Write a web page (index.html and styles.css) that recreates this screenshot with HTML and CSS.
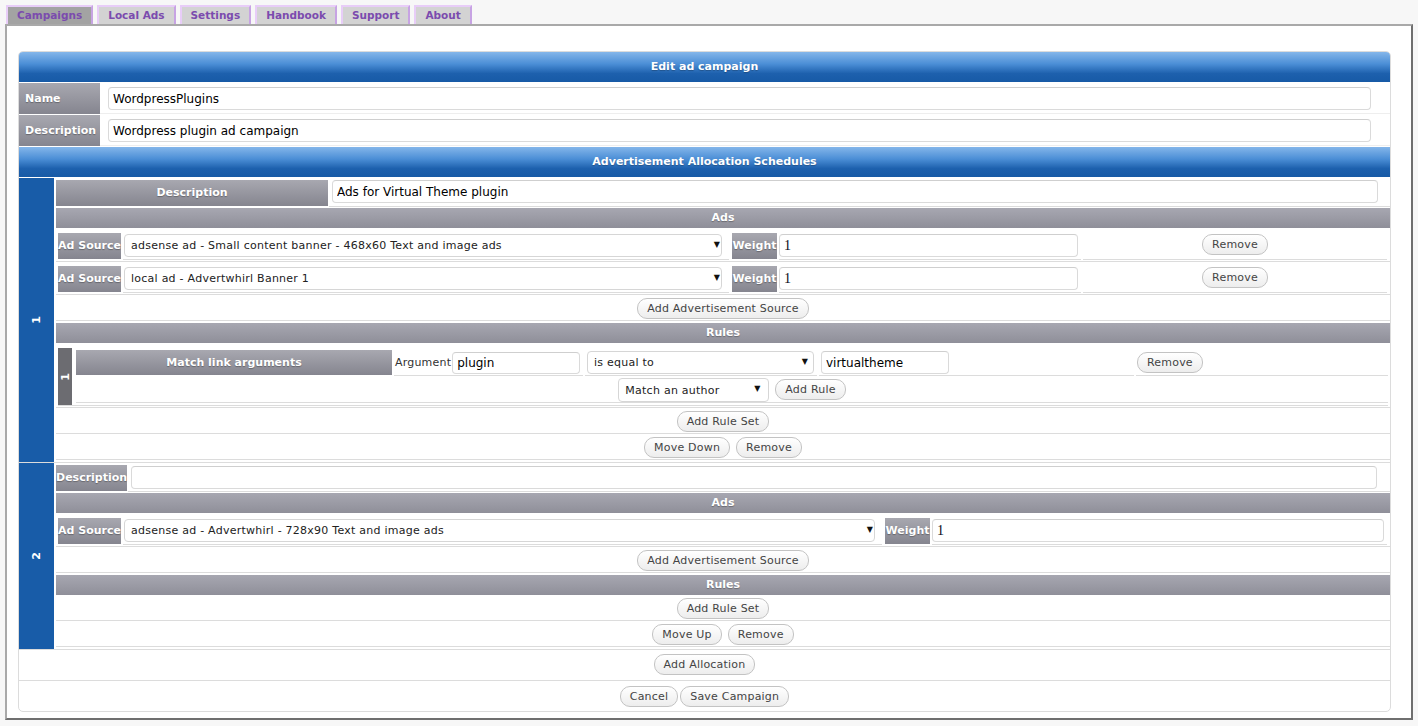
FILE: index.html
```html
<!DOCTYPE html>
<html>
<head>
<meta charset="utf-8">
<title>Edit ad campaign</title>
<link rel="stylesheet" href="styles.css">
</head>
<body>
<nav class="tabs">
  <span class="tab active">Campaigns</span>
  <span class="tab">Local Ads</span>
  <span class="tab">Settings</span>
  <span class="tab">Handbook</span>
  <span class="tab">Support</span>
  <span class="tab">About</span>
</nav>
<main class="panel">
  <div class="campaign">
    <div class="hdr hdr-top">Edit ad campaign</div>
    <div class="frow">
      <div class="flabel">Name</div>
      <div class="fcell"><input class="text ftext" value="WordpressPlugins"></div>
    </div>
    <div class="frow">
      <div class="flabel">Description</div>
      <div class="fcell"><input class="text ftext" value="Wordpress plugin ad campaign"></div>
    </div>
    <div class="hdr">Advertisement Allocation Schedules</div>

    <div class="alloc">
      <div class="alloc-num"><span>1</span></div>
      <div class="alloc-body">
        <div class="desc-row">
          <div class="label desc-label-wide">Description</div>
          <div class="desc-cell"><input class="text desc-input-1" value="Ads for Virtual Theme plugin"></div>
        </div>
        <div class="bar">Ads</div>
        <div class="ad-wrap first">
          <div class="ad-row">
            <div class="label src-label">Ad Source</div>
            <div class="cell sel-cell"><span class="sel"><select class="select ad-select"><option>adsense ad - Small content banner - 468x60 Text and image ads</option></select></span></div>
            <div class="label weight-label">Weight</div>
            <div class="cell weight-cell"><input class="text weight-input" value="1"></div>
            <div class="cell remove-cell"><button class="btn">Remove</button></div>
          </div>
        </div>
        <div class="ad-wrap">
          <div class="ad-row">
            <div class="label src-label">Ad Source</div>
            <div class="cell sel-cell"><span class="sel"><select class="select ad-select"><option>local ad - Advertwhirl Banner 1</option></select></span></div>
            <div class="label weight-label">Weight</div>
            <div class="cell weight-cell"><input class="text weight-input" value="1"></div>
            <div class="cell remove-cell"><button class="btn">Remove</button></div>
          </div>
        </div>
        <div class="btn-row after-ads"><button class="btn">Add Advertisement Source</button></div>
        <div class="bar rules-bar">Rules</div>
        <div class="ruleset-wrap">
          <div class="ruleset">
            <div class="ruleset-num"><span>1</span></div>
            <div class="ruleset-body">
              <div class="rule-row">
                <div class="label rule-label">Match link arguments</div>
                <div class="cell arg-cell"><span class="arg-text">Argument</span><input class="text arg-input" value="plugin"></div>
                <div class="cell op-cell"><span class="sel"><select class="select op-select"><option>is equal to</option></select></span></div>
                <div class="cell val-cell"><input class="text val-input" value="virtualtheme"></div>
                <div class="cell rm-rule-cell"><button class="btn">Remove</button></div>
              </div>
              <div class="add-rule-row">
                <span class="sel"><select class="select author-select"><option>Match an author</option></select></span>
                <button class="btn">Add Rule</button>
              </div>
            </div>
          </div>
        </div>
        <div class="btn-row"><button class="btn">Add Rule Set</button></div>
        <div class="btn-row move-row"><button class="btn">Move Down</button><button class="btn">Remove</button></div>
      </div>
    </div>

    <div class="alloc">
      <div class="alloc-num"><span>2</span></div>
      <div class="alloc-body">
        <div class="desc-row">
          <div class="label desc-label">Description</div>
          <div class="desc-cell"><input class="text desc-input-2" value=""></div>
        </div>
        <div class="bar">Ads</div>
        <div class="ad-wrap first">
          <div class="ad-row">
            <div class="label src-label">Ad Source</div>
            <div class="cell sel-cell wide"><span class="sel"><select class="select ad-select wide"><option>adsense ad - Advertwhirl - 728x90 Text and image ads</option></select></span></div>
            <div class="label weight-label">Weight</div>
            <div class="cell weight-cell wide"><input class="text weight-input wide" value="1"></div>
          </div>
        </div>
        <div class="btn-row after-ads"><button class="btn">Add Advertisement Source</button></div>
        <div class="bar rules-bar">Rules</div>
        <div class="btn-row"><button class="btn">Add Rule Set</button></div>
        <div class="btn-row move-row"><button class="btn">Move Up</button><button class="btn">Remove</button></div>
      </div>
    </div>

    <div class="outer-row"><button class="btn">Add Allocation</button></div>
    <div class="outer-row last"><button class="btn">Cancel</button><button class="btn">Save Campaign</button></div>
  </div>
</main>
</body>
</html>
```

FILE: styles.css
```css
* { box-sizing: border-box; }

body {
  margin: 0;
  background: #f7f7f7;
  font-family: "DejaVu Sans", Verdana, sans-serif;
  font-size: 11px;
  color: #333;
}

/* tabs */
.tabs {
  display: flex;
  gap: 4px;
  height: 24px;
  padding: 5px 0 0 6px;
}
.tab {
  height: 19px;
  padding: 0 9px;
  border: 2px solid #e8cdf8;
  border-right-color: #c7a3e3;
  border-bottom: 0;
  background: #d3d3d3;
  color: #7b4bae;
  font-weight: bold;
  font-size: 10.5px;
  line-height: 16px;
}
.tab.active { background: #a3a3a3; }

/* panel */
.panel {
  display: block;
  margin-left: 5px;
  width: 1408px;
  height: 696px;
  border: 2px solid;
  border-color: #a9a9a9 #6f6f6f #6f6f6f #a9a9a9;
  background: #fff;
  padding: 25px 20px 0 11px;
}

.campaign {
  width: 1373px;
  border: 1px solid #dcdcdc;
  border-radius: 5px;
  overflow: hidden;
  background: #fff;
}

.hdr {
  height: 30px;
  line-height: 30px;
  text-align: center;
  color: #fff;
  font-weight: bold;
  font-size: 11px;
  background: linear-gradient(#84b6ea 0%, #4b8ed6 40%, #1d60ad 72%, #175aa6 100%);
  text-shadow: 0 1px 1px rgba(0,0,0,0.25);
  margin-bottom: 1px;
}

.frow {
  display: flex;
  height: 31px;
  margin-bottom: 1px;
}
.flabel, .label {
  background: linear-gradient(#a8a8b0, #85858f);
  color: #fff;
  font-weight: bold;
  font-size: 11px;
  text-shadow: 0 1px 1px rgba(0,0,0,0.3);
  white-space: nowrap;
}
.flabel {
  width: 81px;
  padding-left: 6px;
  line-height: 31px;
}
.fcell {
  flex: 1;
  padding: 4px 0 0 8px;
  border-bottom: 1px solid #eee;
}

/* inputs */
.text {
  display: block;
  height: 23px;
  border: 1px solid #dadada;
  border-top-color: #cfcfcf;
  border-radius: 4px;
  padding: 0 5px 0 4px;
  font-family: "DejaVu Sans", Verdana, sans-serif;
  font-size: 12px;
  color: #000;
  background: #fff;
  outline: none;
}
.ftext { width: 1263px; }

.sel {
  position: relative;
  display: block;
}
.sel::after {
  content: "\25BC";
  position: absolute;
  right: 9px;
  top: 6px;
  font-size: 8px;
  color: #111;
  pointer-events: none;
}
.select {
  display: block;
  -webkit-appearance: none;
  appearance: none;
  height: 23px;
  border: 1px solid #d6d6d6;
  border-radius: 4px;
  background: #fff;
  padding: 0 20px 0 6px;
  font-family: "DejaVu Sans", Verdana, sans-serif;
  font-size: 11px;
  letter-spacing: 0.25px;
  color: #222;
  outline: none;
}

/* allocations */
.alloc {
  display: flex;
  gap: 2px;
  border-bottom: 1px solid #dcdcdc;
}
.alloc-num {
  width: 35px;
  background: #185ca8;
  color: #fff;
  font-weight: bold;
  font-size: 11px;
  display: flex;
  align-items: center;
  justify-content: center;
}
.alloc-num span, .ruleset-num span {
  writing-mode: vertical-rl;
  transform: rotate(180deg);
}
.alloc-body {
  width: 1334px;
  padding-bottom: 2px;
}

.desc-row {
  display: flex;
  height: 27px;
  margin-top: 2px;
}
.desc-row .label {
  height: 26px;
  line-height: 26px;
}
.desc-label-wide { width: 272px; text-align: center; }
.desc-label { width: 71px; text-align: center; }
.desc-cell {
  flex: 1;
  padding: 0 0 0 4px;
  border-bottom: 1px solid #dcdcdc;
  margin-left: 1px;
}
.desc-input-1 { width: 1046px; margin-left: -1px; }
.desc-input-2 { width: 1246px; margin-top: 1px; margin-left: -1px; }

.bar {
  height: 20px;
  line-height: 20px;
  margin-top: 1px;
  text-align: center;
  color: #fff;
  font-weight: bold;
  font-size: 11px;
  background: linear-gradient(#a7a7b1, #8f8f99);
  text-shadow: 0 1px 1px rgba(0,0,0,0.3);
}
.rules-bar { margin-top: 2px; }

.ad-wrap {
  margin-top: 2px;
  padding: 2px 2px 1px;
  border-bottom: 1px solid #dcdcdc;
}
.ad-wrap.first { margin-top: 3px; }
.ad-row {
  display: flex;
  gap: 2px;
  height: 27px;
}
.ad-row .label {
  height: 26px;
  line-height: 26px;
}
.cell {
  border-bottom: 1px solid #dcdcdc;
}
.src-label { width: 63px; text-align: center; }
.weight-label { width: 45px; text-align: center; margin-left: 1px; }
.sel-cell { width: 606px; padding: 1px 0 0 1px; }
.sel-cell.wide { width: 759px; }
.ad-select { width: 598px; }
.ad-select.wide { width: 751px; }
.weight-cell { width: 302px; padding: 1px 0 0 0; }
.weight-cell.wide { width: 455px; }
.weight-input {
  width: 299px;
  font-family: "Liberation Serif", "Times New Roman", serif;
  font-size: 14px;
  color: #0a0a20;
}
.weight-input.wide { width: 452px; }
.remove-cell {
  width: 304px;
  display: flex;
  justify-content: center;
  padding-top: 1px;
}

/* buttons */
.btn {
  height: 21px;
  padding: 0 9px;
  border: 1px solid #c3c3c3;
  border-radius: 10px;
  background: linear-gradient(#ffffff, #ededed);
  font-family: "DejaVu Sans", Verdana, sans-serif;
  font-size: 11px;
  letter-spacing: 0.2px;
  color: #444;
  line-height: 19px;
  cursor: pointer;
}

.btn-row {
  display: flex;
  justify-content: center;
  gap: 7px;
  margin-top: 2px;
  padding: 1px 0 1px;
  border-bottom: 1px solid #dcdcdc;
}
.btn-row.after-ads { margin-top: 1px; padding-top: 2px; }
.move-row { gap: 6px; }

/* rule set */
.ruleset-wrap {
  margin-top: 2px;
  padding: 3px 2px 1px;
  border-bottom: 1px solid #dcdcdc;
}
.ruleset {
  display: flex;
  gap: 4px;
  border-bottom: 1px solid #dcdcdc;
}
.ruleset-num {
  width: 14px;
  background: #6c6c71;
  color: #fff;
  font-weight: bold;
  font-size: 11px;
  display: flex;
  align-items: center;
  justify-content: center;
}
.ruleset-body {
  flex: 1;
  padding: 2px 0 2px;
}
.rule-row {
  display: flex;
  gap: 2px;
  height: 26px;
}
.rule-label {
  width: 316px;
  height: 25px;
  line-height: 25px;
  text-align: center;
}
.arg-cell {
  width: 189px;
  display: flex;
  align-items: flex-start;
  padding-top: 2px;
}
.arg-text {
  padding: 4px 1px 0 1px;
  color: #333;
  font-size: 11px;
  letter-spacing: 0.2px;
}
.arg-input { width: 128px; height: 22px; }
.op-cell { width: 232px; padding: 1px 0 0 2px; }
.op-select { width: 227px; }
.val-cell { width: 315px; padding: 1px 0 0 2px; }
.val-input { width: 128px; }
.rm-rule-cell { flex: 1; padding: 2px 0 0 1px; }
.add-rule-row {
  display: flex;
  justify-content: center;
  gap: 6px;
  margin-top: 2px;
  height: 25px;
  border-bottom: 1px solid #dcdcdc;
}
.author-select { width: 151px; height: 24px; }
.add-rule-row .btn { margin-top: 1px; }

/* outer rows */
.outer-row {
  display: flex;
  justify-content: center;
  gap: 2px;
  padding: 4px 0 5px;
  border-bottom: 1px solid #dcdcdc;
}
.outer-row.last { border-bottom: 0; padding: 5px 0 4px; }
```
